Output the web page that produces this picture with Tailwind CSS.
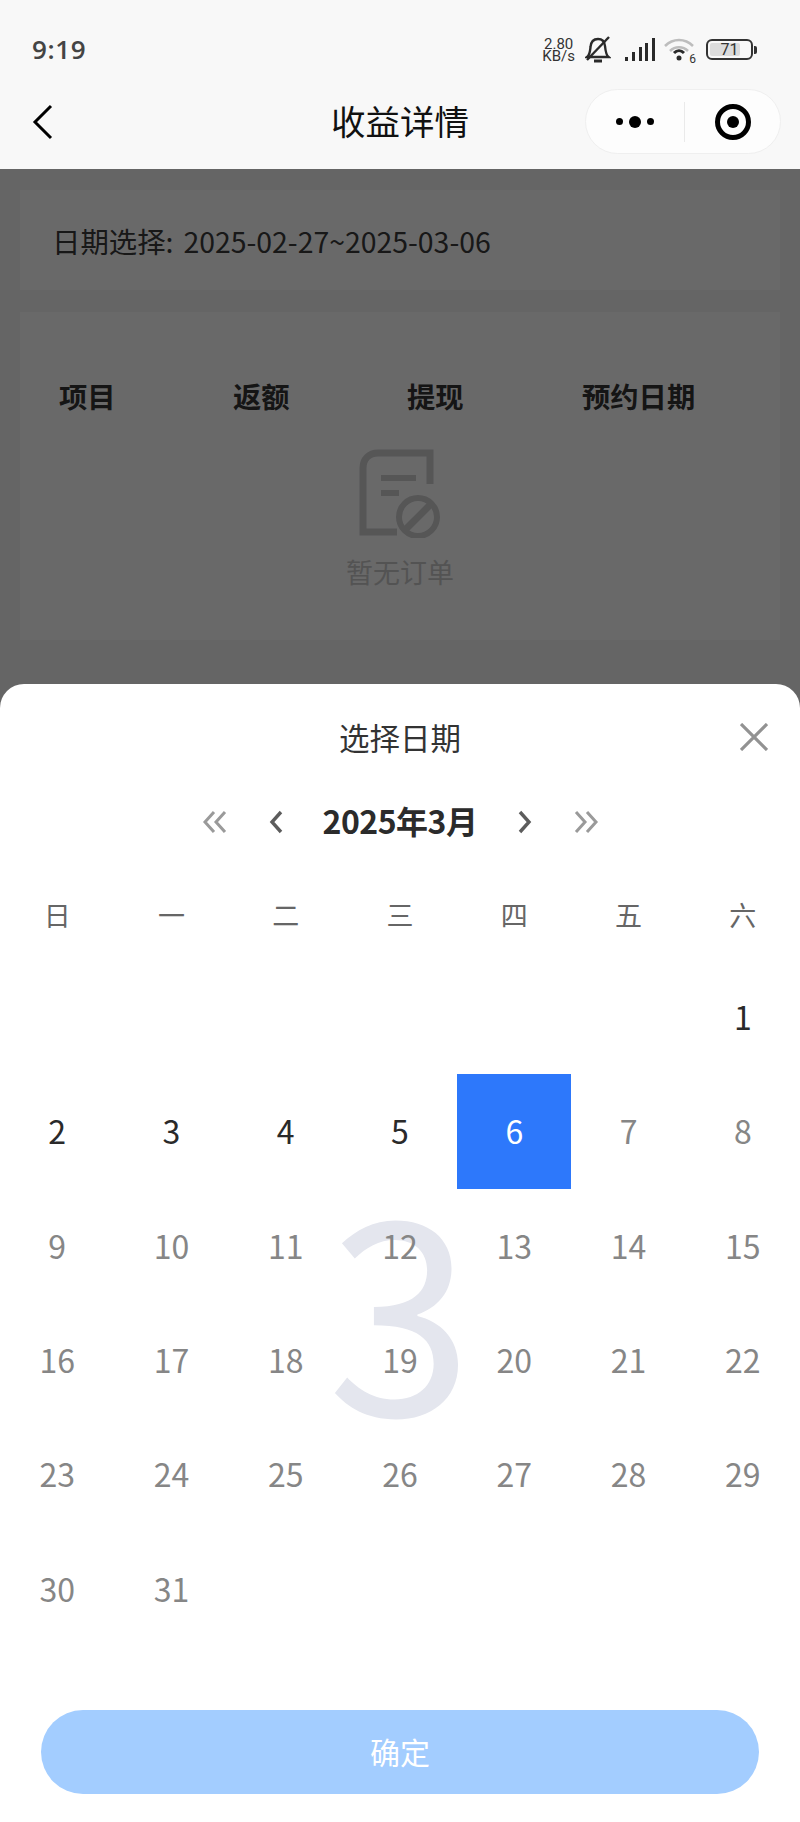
<!DOCTYPE html>
<html lang="zh"><head><meta charset="utf-8">
<script src="https://cdn.jsdelivr.net/npm/@tailwindcss/browser@4"></script>
</head>
<body class="m-0">
<div class="relative w-[800px] h-[1822px] overflow-hidden bg-[#f4f4f4] font-['Noto_Sans_CJK_SC','Noto_Sans',sans-serif]">
  <!-- top bar -->
  <header class="h-[169px] bg-[#f8f8f8] flex flex-col">
    <div class="h-[88px] flex items-center justify-between pl-[32px] pr-[43px] pt-[11px]">
      <span class="text-[26px] font-semibold text-[#444] font-['Open_Sans',sans-serif] tracking-[0.6px]">9:19</span>
      <div class="flex items-center">
        <div class="flex flex-col items-center text-[15px] leading-[12px] text-[#333] font-['Roboto',sans-serif] mr-[10px]"><span>2.80</span><span>KB/s</span></div>
        <svg class="w-[26px] h-[28px] mr-[14px] mt-[-2px]" viewBox="0 0 26 28" fill="none" stroke="#2a2a2a" stroke-width="2.400"><path d="M2 22c3-2 3-6 3.500-10C6 6 9 4 13 4c4 0 6.500 2 7 7 .5 5 1 9 3.500 11z"/><path d="M2 25 24 2"/><path d="M9 26h8" stroke-width="3"/></svg>
        <svg class="w-[30px] h-[24px] mr-[9px]" viewBox="0 0 30 24" fill="#2a2a2a"><rect x="0" y="19" width="3" height="4"/><rect x="7" y="14" width="3" height="9"/><rect x="14" y="9" width="3" height="14"/><rect x="20" y="5" width="3" height="18"/><rect x="27" y="0" width="3" height="23"/></svg>
        <div class="relative w-[32px] h-[24px] mr-[10px]">
          <svg class="w-[32px] h-[24px]" viewBox="0 0 32 24" fill="none"><path d="M1 8c8-8 20-8 28 0" stroke="#bdbdbd" stroke-width="2.500"/><path d="M6 13c5-5 13-5 18 0" stroke="#bdbdbd" stroke-width="2.500"/><path d="M10 15c3-3 7-3 10 0" stroke="#2a2a2a" stroke-width="3"/><circle cx="15" cy="20" r="2.500" fill="#2a2a2a"/></svg>
          <span class="absolute right-[0px] bottom-[-3px] text-[12px] leading-[12px] text-[#333] font-['Roboto',sans-serif]">6</span>
        </div>
        <div class="flex items-center">
          <div class="relative w-[47px] h-[21px] rounded-[6px] border-[2px] border-[#333] p-[2px]">
            <div class="w-[30px] h-full rounded-[2px] bg-[#dcdcdc]"></div>
            <span class="absolute inset-0 flex items-center justify-center text-[16px] leading-none text-[#333] font-['Roboto',sans-serif]">71</span>
          </div>
          <div class="w-[3px] h-[8px] ml-[1px] rounded-r-[2px] bg-[#333]"></div>
        </div>
      </div>
    </div>
    <div class="relative flex-1 flex items-center justify-center">
      <svg class="absolute left-[32px] top-[16px] w-[22px] h-[36px]" viewBox="0 0 22 36" fill="none" stroke="#000" stroke-width="3"><path d="M19 2 3 18l16 16"/></svg>
      <h1 class="text-[34.500px] leading-none font-normal text-[#111] pb-[16px]">收益详情</h1>
      <div class="absolute right-[19px] top-[1px] w-[196px] h-[65px] rounded-full bg-[#fdfdfd] border border-[#efefef] flex items-center">
        <div class="w-[98px] flex items-center justify-center gap-[6px]"><span class="w-[7px] h-[7px] rounded-full bg-black"></span><span class="w-[12px] h-[12px] rounded-full bg-black"></span><span class="w-[7px] h-[7px] rounded-full bg-black"></span></div>
        <div class="w-px h-[40px] bg-[#eaeaea]"></div>
        <div class="flex-1 flex items-center justify-center"><span class="w-[36px] h-[36px] rounded-full border-[5px] border-black flex items-center justify-center"><span class="w-[12px] h-[12px] rounded-full bg-black"></span></span></div>
      </div>
    </div>
  </header>
  <!-- page underneath -->
  <main class="px-[20px] pt-[21px] flex flex-col gap-[22px]">
    <section class="h-[100px] bg-white flex items-center pl-[32px] pt-[2px] text-[28.400px] text-[#3a3a3a]"><span>日期选择:</span><span class="ml-[10px]">2025-02-27~2025-03-06</span></section>
    <section class="h-[328px] bg-white">
      <div class="grid grid-cols-[174px_174px_175px_1fr] pl-[39px] pt-[64px] text-[28.300px] leading-[40px] font-bold text-[#333]">
        <span>项目</span><span>返额</span><span>提现</span><span>预约日期</span>
      </div>
      <div class="flex flex-col items-center mt-[32px]">
        <svg class="w-[84px] h-[90px]" viewBox="0 0 84 90" fill="none" stroke="#d0d0d2"><path d="M72 36V5H20C11 5 5 11 5 20v64h34" stroke-width="7"/><path d="M23 30h35M23 45h18" stroke-width="6"/><circle cx="60" cy="69" r="19" stroke-width="6"/><path d="M47 82 72 57" stroke-width="7"/></svg>
        <span class="text-[27px] leading-[38px] text-[#cacaca] mt-[15px]">暂无订单</span>
      </div>
    </section>
  </main>
  <!-- overlay -->
  <div class="absolute inset-x-0 bottom-0 top-[169px] bg-black/[0.59]"></div>
  <!-- bottom sheet -->
  <section class="absolute inset-x-0 bottom-0 h-[1138px] bg-white rounded-t-[24px] flex flex-col">
    <div class="relative h-[110px] flex items-center justify-center text-[30.500px] text-[#333]">
      <span class="mt-[-3px]">选择日期</span>
      <svg class="absolute right-[32px] top-[39px] w-[28px] h-[28px]" viewBox="0 0 28 28" fill="none" stroke="#929292" stroke-width="3.200"><path d="M1 1l26 26M27 1 1 27"/></svg>
    </div>
    <div class="relative h-[56px] flex items-center justify-center text-[32px] font-bold text-[#2b2b2b] tracking-[-0.5px]">
      <span class="mt-[-4px]">2025年3月</span>
      <svg class="absolute left-[202px] top-[16px] w-[25px] h-[24px]" viewBox="0 0 25 24" fill="none" stroke="#9a9a9a" stroke-width="3"><path d="M12 2 3 12l9 10M23 2l-9 10 9 10"/></svg>
      <svg class="absolute left-[269px] top-[16px] w-[14px] h-[24px]" viewBox="0 0 14 24" fill="none" stroke="#5c5c5c" stroke-width="3.400"><path d="M12 2 3 12l9 10"/></svg>
      <svg class="absolute left-[518px] top-[16px] w-[14px] h-[24px]" viewBox="0 0 14 24" fill="none" stroke="#5c5c5c" stroke-width="3.400"><path d="m2 2 9 10-9 10"/></svg>
      <svg class="absolute left-[574px] top-[16px] w-[25px] h-[24px]" viewBox="0 0 25 24" fill="none" stroke="#9a9a9a" stroke-width="3"><path d="m2 2 9 10-9 10M13 2l9 10-9 10"/></svg>
    </div>
    <div class="grid grid-cols-7 mt-[24px] h-[86px] items-start pt-[22px] text-[27px] leading-[38px] text-[#666] text-center">
      <span>日</span><span>一</span><span>二</span><span>三</span><span>四</span><span>五</span><span>六</span>
    </div>
    <div class="relative grid grid-cols-7 auto-rows-[114.3px] text-[32px] text-center text-[#868686]">
      <div class="absolute inset-0 pb-[2px] flex items-center justify-center text-[262px] leading-none text-[#e4e6ee] font-normal">3</div>
      <span class="relative col-start-7 flex items-center justify-center pb-[2px] text-[#2a2a2a]">1</span>
      <span class="relative flex items-center justify-center pb-[2px] text-[#2a2a2a]">2</span>
      <span class="relative flex items-center justify-center pb-[2px] text-[#2a2a2a]">3</span>
      <span class="relative flex items-center justify-center pb-[2px] text-[#2a2a2a]">4</span>
      <span class="relative flex items-center justify-center pb-[2px] text-[#2a2a2a]">5</span>
      <span class="relative flex items-center justify-center pb-[2px] bg-[#2d78fb] text-white">6</span>
      <span class="relative flex items-center justify-center pb-[2px]">7</span>
      <span class="relative flex items-center justify-center pb-[2px]">8</span>
      <span class="relative flex items-center justify-center pb-[2px]">9</span>
      <span class="relative flex items-center justify-center pb-[2px]">10</span>
      <span class="relative flex items-center justify-center pb-[2px]">11</span>
      <span class="relative flex items-center justify-center pb-[2px]">12</span>
      <span class="relative flex items-center justify-center pb-[2px]">13</span>
      <span class="relative flex items-center justify-center pb-[2px]">14</span>
      <span class="relative flex items-center justify-center pb-[2px]">15</span>
      <span class="relative flex items-center justify-center pb-[2px]">16</span>
      <span class="relative flex items-center justify-center pb-[2px]">17</span>
      <span class="relative flex items-center justify-center pb-[2px]">18</span>
      <span class="relative flex items-center justify-center pb-[2px]">19</span>
      <span class="relative flex items-center justify-center pb-[2px]">20</span>
      <span class="relative flex items-center justify-center pb-[2px]">21</span>
      <span class="relative flex items-center justify-center pb-[2px]">22</span>
      <span class="relative flex items-center justify-center pb-[2px]">23</span>
      <span class="relative flex items-center justify-center pb-[2px]">24</span>
      <span class="relative flex items-center justify-center pb-[2px]">25</span>
      <span class="relative flex items-center justify-center pb-[2px]">26</span>
      <span class="relative flex items-center justify-center pb-[2px]">27</span>
      <span class="relative flex items-center justify-center pb-[2px]">28</span>
      <span class="relative flex items-center justify-center pb-[2px]">29</span>
      <span class="relative flex items-center justify-center pb-[2px]">30</span>
      <span class="relative flex items-center justify-center pb-[2px]">31</span>
    </div>
    <button class="mt-[64px] mx-[41px] h-[84px] rounded-full bg-[#a3cdff] text-white text-[30px]">确定</button>
  </section>
</div>
</body></html>
